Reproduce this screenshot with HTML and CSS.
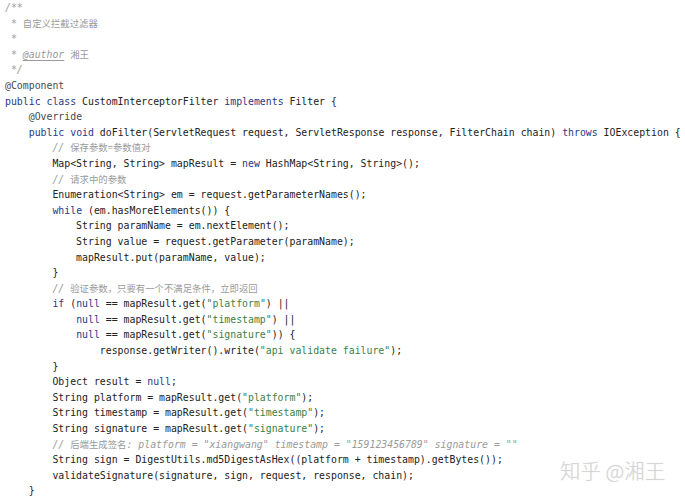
FILE: index.html
```html
<!DOCTYPE html>
<html>
<head>
<meta charset="utf-8">
<link rel="stylesheet" href="styles.css">
</head>
<body>
<div class="code">
<div class="l"><span class="cm">/**</span></div>
<div class="l"><span class="cm"> * <span class="cj">自定义拦截过滤器</span></span></div>
<div class="l"><span class="cm"> *</span></div>
<div class="l"><span class="cm"> * <u>@author</u> <span class="cj">湘王</span></span></div>
<div class="l"><span class="cm"> */</span></div>
<div class="l"><span class="an">@Component</span></div>
<div class="l"><span class="kw">public class</span> CustomInterceptorFilter <span class="kw">implements</span> Filter {</div>
<div class="l">    <span class="an">@Override</span></div>
<div class="l">    <span class="kw">public void</span> doFilter(ServletRequest request, ServletResponse response, FilterChain chain) <span class="kw">throws</span> IOException {</div>
<div class="l">        <span class="cm">// <span class="cj">保存参数=参数值对</span></span></div>
<div class="l">        Map&lt;String, String&gt; mapResult = <span class="kw">new</span> HashMap&lt;String, String&gt;();</div>
<div class="l">        <span class="cm">// <span class="cj">请求中的参数</span></span></div>
<div class="l">        Enumeration&lt;String&gt; em = request.getParameterNames();</div>
<div class="l">        <span class="kw">while</span> (em.hasMoreElements()) {</div>
<div class="l">            String paramName = em.nextElement();</div>
<div class="l">            String value = request.getParameter(paramName);</div>
<div class="l">            mapResult.put(paramName, value);</div>
<div class="l">        }</div>
<div class="l">        <span class="cm">// <span class="cj">验证参数，只要有一个不满足条件，立即返回</span></span></div>
<div class="l">        <span class="kw">if</span> (<span class="kw">null</span> == mapResult.get(<span class="st">"platform"</span>) ||</div>
<div class="l">            <span class="kw">null</span> == mapResult.get(<span class="st">"timestamp"</span>) ||</div>
<div class="l">            <span class="kw">null</span> == mapResult.get(<span class="st">"signature"</span>)) {</div>
<div class="l">                response.getWriter().write(<span class="st">"api validate failure"</span>);</div>
<div class="l">        }</div>
<div class="l">        Object result = <span class="kw">null</span>;</div>
<div class="l">        String platform = mapResult.get(<span class="st">"platform"</span>);</div>
<div class="l">        String timestamp = mapResult.get(<span class="st">"timestamp"</span>);</div>
<div class="l">        String signature = mapResult.get(<span class="st">"signature"</span>);</div>
<div class="l">        <span class="cm">// <span class="cj">后端生成签名</span>: platform = "xiangwang" timestamp = "159123456789" signature = ""</span></div>
<div class="l">        String sign = DigestUtils.md5DigestAsHex((platform + timestamp).getBytes());</div>
<div class="l">        validateSignature(signature, sign, request, response, chain);</div>
<div class="l">    }</div>
</div>
<div class="mark">知乎 @湘王</div>
</body>
</html>
```

FILE: styles.css
```css
html, body {
  margin: 0;
  padding: 0;
  background: #ffffff;
}
body {
  position: relative;
  width: 685px;
  height: 500px;
  overflow: hidden;
}
.code {
  padding: 0 0 0 5px;
  font-family: "DejaVu Sans Mono", "Noto Sans CJK SC", monospace;
  font-size: 9.85px;
  color: #222222;
}
.l {
  white-space: pre;
  height: 15.6px;
  line-height: 15.6px;
  overflow: visible;
}
.kw { color: #27398a; }
.st { color: #3b7f45; }
.cm { color: #9a9a9a; font-style: italic; }
.cm u { text-decoration-thickness: 1px; text-underline-offset: 2px; }
.cj { font-family: "Noto Sans CJK SC", sans-serif; font-style: normal; font-size: 9.4px; }
.an { color: #4a4a4a; }
.mark {
  position: absolute;
  left: 560px;
  top: 455px;
  font-family: "Noto Sans CJK SC", sans-serif;
  font-size: 20.5px;
  font-weight: 300;
  color: #d6d6d6;
  text-shadow: 0 0 1px #e2e2e2;
}
```
